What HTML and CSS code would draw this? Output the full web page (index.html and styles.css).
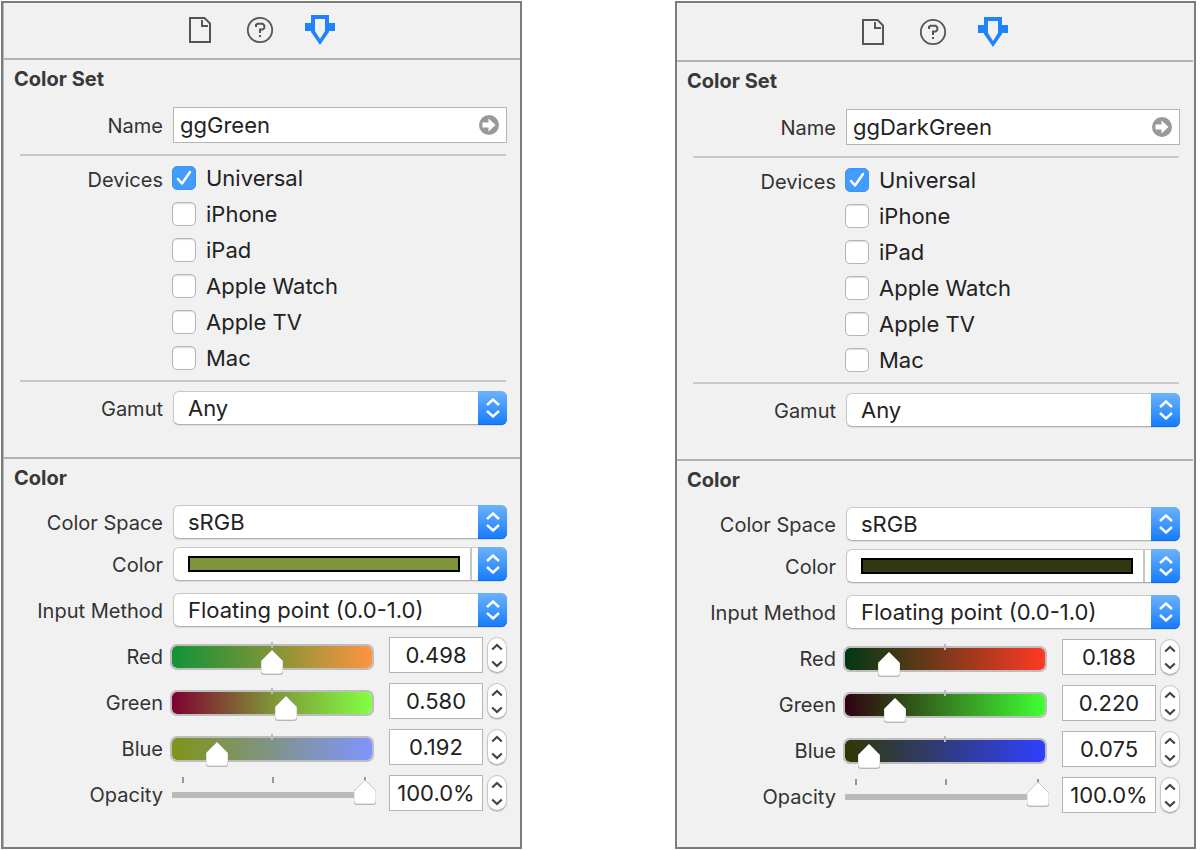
FILE: index.html
```html
<!DOCTYPE html>
<html lang="en">
<head>
<meta charset="utf-8">
<title>Color Set Inspector</title>
<link rel="stylesheet" href="styles.css">
</head>
<body>
<svg class="sprite" aria-hidden="true">
  <symbol id="i-file" viewBox="0 0 24 28"><path d="M2 2H16.500L22 7.500V26H2Z" fill="none" stroke="#555" stroke-width="2"/><path d="M14 4V10H20" fill="none" stroke="#555" stroke-width="2"/></symbol>
  <symbol id="i-help" viewBox="0 0 28 28"><circle cx="14" cy="14" r="12.200" fill="none" stroke="#555" stroke-width="1.800"/><path d="M10 11V8.800L11.500 7.800H16.700L18.300 9.400V12L16.700 13.600H14V17" fill="none" stroke="#555" stroke-width="2"/><path d="M13 19H15V21H13Z" fill="#555"/></symbol>
  <symbol id="i-attr" viewBox="0 0 30 30"><path fill="#1f83fb" fill-rule="evenodd" d="M6 0H24V8H30V16H24V17L15 30L6 17V16H0V8H6ZM10 4V16L15 24L20 16V4Z"/></symbol>
  <symbol id="i-go" viewBox="0 0 20 20"><circle cx="10" cy="10" r="10" fill="#999"/><path d="M3.500 7.500H9.500V3.500L16.500 10L9.500 16.500V12.500H3.500Z" fill="#fff"/></symbol>
  <symbol id="i-updown" viewBox="0 0 14 20"><path d="M1 7L7 1.500L13 7M1 13L7 18.500L13 13" fill="none" stroke="#fff" stroke-width="2.400"/></symbol>
  <symbol id="i-up" viewBox="0 0 12 8"><path d="M1.200 6.500L6 2L10.800 6.500" fill="none" stroke="#444" stroke-width="2.200"/></symbol>
  <symbol id="i-down" viewBox="0 0 12 8"><path d="M1.200 1.500L6 6L10.800 1.500" fill="none" stroke="#444" stroke-width="2.200"/></symbol>
</svg>
<main class="page">
  <section class="panel panel-light">
    <nav class="tabs">
      <button class="tab" aria-label="File"><svg width="24" height="28"><use href="#i-file"/></svg></button>
      <button class="tab" aria-label="Help"><svg width="28" height="28"><use href="#i-help"/></svg></button>
      <button class="tab" aria-label="Attributes"><svg width="30" height="30"><use href="#i-attr"/></svg></button>
    </nav>
    <div class="section">
      <h2 class="title">Color Set</h2>
      <div class="row">
        <label class="label" for="a-name">Name</label>
        <div class="field"><input class="text" id="a-name" value="ggGreen"><button class="go" aria-label="Go"><svg width="20" height="20"><use href="#i-go"/></svg></button></div>
      </div>
      <hr class="rule">
      <div class="row devices">
        <span class="label device-label">Devices</span>
        <div class="checks">
          <label class="check"><input type="checkbox" checked>Universal</label>
          <label class="check"><input type="checkbox">iPhone</label>
          <label class="check"><input type="checkbox">iPad</label>
          <label class="check"><input type="checkbox">Apple Watch</label>
          <label class="check"><input type="checkbox">Apple TV</label>
          <label class="check"><input type="checkbox">Mac</label>
        </div>
      </div>
      <hr class="rule rule-tight">
      <div class="row gamut">
        <label class="label" for="a-gamut">Gamut</label>
        <div class="popup"><select id="a-gamut"><option>Any</option></select><span class="cap"><svg width="14" height="20"><use href="#i-updown"/></svg></span></div>
      </div>
    </div>
    <div class="section color">
      <h2 class="title">Color</h2>
      <div class="row">
        <label class="label" for="a-space">Color Space</label>
        <div class="popup"><select id="a-space"><option>sRGB</option></select><span class="cap"><svg width="14" height="20"><use href="#i-updown"/></svg></span></div>
      </div>
      <div class="row well-row">
        <label class="label" for="a-well">Color</label>
        <div class="popup"><button class="well" id="a-well"><span class="swatch swatch-green"></span></button><span class="cap"><svg width="14" height="20"><use href="#i-updown"/></svg></span></div>
      </div>
      <div class="row method-row">
        <label class="label" for="a-method">Input Method</label>
        <div class="popup"><select id="a-method"><option>Floating point (0.0-1.0)</option></select><span class="cap"><svg width="14" height="20"><use href="#i-updown"/></svg></span></div>
      </div>
      <div class="row channel">
        <label class="label" for="a-red">Red</label>
        <div class="control"><div class="slider tinted g-red"><input type="range" id="a-red" min="0" max="1" step="0.001" value="0.498"></div><input class="value" aria-label="Red value" value="0.498"><div class="stepper"><button aria-label="Increase red"><svg width="12" height="8"><use href="#i-up"/></svg></button><button aria-label="Decrease red"><svg width="12" height="8"><use href="#i-down"/></svg></button></div></div>
      </div>
      <div class="row channel">
        <label class="label" for="a-green">Green</label>
        <div class="control"><div class="slider tinted g-green"><input type="range" id="a-green" min="0" max="1" step="0.001" value="0.580"></div><input class="value" aria-label="Green value" value="0.580"><div class="stepper"><button aria-label="Increase green"><svg width="12" height="8"><use href="#i-up"/></svg></button><button aria-label="Decrease green"><svg width="12" height="8"><use href="#i-down"/></svg></button></div></div>
      </div>
      <div class="row channel">
        <label class="label" for="a-blue">Blue</label>
        <div class="control"><div class="slider tinted g-blue"><input type="range" id="a-blue" min="0" max="1" step="0.001" value="0.192"></div><input class="value" aria-label="Blue value" value="0.192"><div class="stepper"><button aria-label="Increase blue"><svg width="12" height="8"><use href="#i-up"/></svg></button><button aria-label="Decrease blue"><svg width="12" height="8"><use href="#i-down"/></svg></button></div></div>
      </div>
      <div class="row channel">
        <label class="label" for="a-opacity">Opacity</label>
        <div class="control"><div class="slider plain"><input type="range" id="a-opacity" min="0" max="100" value="100"></div><input class="value" aria-label="Opacity value" value="100.0%"><div class="stepper"><button aria-label="Increase opacity"><svg width="12" height="8"><use href="#i-up"/></svg></button><button aria-label="Decrease opacity"><svg width="12" height="8"><use href="#i-down"/></svg></button></div></div>
      </div>
    </div>
  </section>

  <section class="panel panel-dark">
    <nav class="tabs">
      <button class="tab" aria-label="File"><svg width="24" height="28"><use href="#i-file"/></svg></button>
      <button class="tab" aria-label="Help"><svg width="28" height="28"><use href="#i-help"/></svg></button>
      <button class="tab" aria-label="Attributes"><svg width="30" height="30"><use href="#i-attr"/></svg></button>
    </nav>
    <div class="section">
      <h2 class="title">Color Set</h2>
      <div class="row">
        <label class="label" for="b-name">Name</label>
        <div class="field"><input class="text" id="b-name" value="ggDarkGreen"><button class="go" aria-label="Go"><svg width="20" height="20"><use href="#i-go"/></svg></button></div>
      </div>
      <hr class="rule">
      <div class="row devices">
        <span class="label device-label">Devices</span>
        <div class="checks">
          <label class="check"><input type="checkbox" checked>Universal</label>
          <label class="check"><input type="checkbox">iPhone</label>
          <label class="check"><input type="checkbox">iPad</label>
          <label class="check"><input type="checkbox">Apple Watch</label>
          <label class="check"><input type="checkbox">Apple TV</label>
          <label class="check"><input type="checkbox">Mac</label>
        </div>
      </div>
      <hr class="rule rule-tight">
      <div class="row gamut">
        <label class="label" for="b-gamut">Gamut</label>
        <div class="popup"><select id="b-gamut"><option>Any</option></select><span class="cap"><svg width="14" height="20"><use href="#i-updown"/></svg></span></div>
      </div>
    </div>
    <div class="section color">
      <h2 class="title">Color</h2>
      <div class="row">
        <label class="label" for="b-space">Color Space</label>
        <div class="popup"><select id="b-space"><option>sRGB</option></select><span class="cap"><svg width="14" height="20"><use href="#i-updown"/></svg></span></div>
      </div>
      <div class="row well-row">
        <label class="label" for="b-well">Color</label>
        <div class="popup"><button class="well" id="b-well"><span class="swatch swatch-dark"></span></button><span class="cap"><svg width="14" height="20"><use href="#i-updown"/></svg></span></div>
      </div>
      <div class="row method-row">
        <label class="label" for="b-method">Input Method</label>
        <div class="popup"><select id="b-method"><option>Floating point (0.0-1.0)</option></select><span class="cap"><svg width="14" height="20"><use href="#i-updown"/></svg></span></div>
      </div>
      <div class="row channel">
        <label class="label" for="b-red">Red</label>
        <div class="control"><div class="slider tinted d-red"><input type="range" id="b-red" min="0" max="1" step="0.001" value="0.188"></div><input class="value" aria-label="Red value" value="0.188"><div class="stepper"><button aria-label="Increase red"><svg width="12" height="8"><use href="#i-up"/></svg></button><button aria-label="Decrease red"><svg width="12" height="8"><use href="#i-down"/></svg></button></div></div>
      </div>
      <div class="row channel">
        <label class="label" for="b-green">Green</label>
        <div class="control"><div class="slider tinted d-green"><input type="range" id="b-green" min="0" max="1" step="0.001" value="0.220"></div><input class="value" aria-label="Green value" value="0.220"><div class="stepper"><button aria-label="Increase green"><svg width="12" height="8"><use href="#i-up"/></svg></button><button aria-label="Decrease green"><svg width="12" height="8"><use href="#i-down"/></svg></button></div></div>
      </div>
      <div class="row channel">
        <label class="label" for="b-blue">Blue</label>
        <div class="control"><div class="slider tinted d-blue"><input type="range" id="b-blue" min="0" max="1" step="0.001" value="0.075"></div><input class="value" aria-label="Blue value" value="0.075"><div class="stepper"><button aria-label="Increase blue"><svg width="12" height="8"><use href="#i-up"/></svg></button><button aria-label="Decrease blue"><svg width="12" height="8"><use href="#i-down"/></svg></button></div></div>
      </div>
      <div class="row channel">
        <label class="label" for="b-opacity">Opacity</label>
        <div class="control"><div class="slider plain"><input type="range" id="b-opacity" min="0" max="100" value="100"></div><input class="value" aria-label="Opacity value" value="100.0%"><div class="stepper"><button aria-label="Increase opacity"><svg width="12" height="8"><use href="#i-up"/></svg></button><button aria-label="Decrease opacity"><svg width="12" height="8"><use href="#i-down"/></svg></button></div></div>
      </div>
    </div>
  </section>
</main>
</body>
</html>
```
FILE: styles.css
```css
* { box-sizing: border-box; }
body { margin: 0; background: #fff; color: #222; font: 22px/26px Inter, "Liberation Sans", sans-serif; }
input, select, button { font: inherit; color: inherit; margin: 0; padding: 0; border: 0; background: none; border-radius: 0; }
.sprite { position: absolute; width: 0; height: 0; }
svg { display: block; }

.page { display: grid; grid-template-columns: 1fr 1fr; gap: 153px; padding: 1px 4px 1px 1px; }
.panel { border: 2px solid #7b7d7d; background: #f1f1f1; }
.panel-light { padding: 0 0 36px 1px; box-shadow: inset 1px 0 #b8baba; }
.panel-dark { padding: 2px 1px 0 0; }

.tabs { display: flex; justify-content: center; align-items: center; height: 57px; padding: 0 4px 2px 0; gap: 30px; border-bottom: 2px solid #b2b2b2; }
.tab { display: grid; place-items: center; width: 30px; }

.section { padding-bottom: 32px; }
.color { border-top: 2px solid #b2b2b2; padding-bottom: 0; }
.title { margin: 0 0 8px; padding-left: 10px; font-size: 20px; line-height: 38px; font-weight: 700; color: #383838; }
.row { display: grid; grid-template-columns: 159px minmax(0, 1fr); column-gap: 10px; align-items: center; padding-right: 13px; }
.label { padding-top: 2px; text-align: right; font-size: 20px; color: #333; }
.rule { border: 0; height: 2px; background: #cacaca; margin: 11px 14px 4px 16px; }
.rule-tight { margin-top: 4px; }

.field { position: relative; display: flex; margin-top: 1px; }
.text { width: 100%; height: 36px; padding: 0 36px 0 6px; border: 1px solid #b4b4b4; background: #fff; }
.go { position: absolute; right: 8px; top: 8px; }

.devices { align-items: start; }
.device-label { line-height: 36px; }
.checks { margin-left: -1px; }
.check { display: flex; align-items: center; gap: 10px; height: 36px; }
.check input { appearance: none; width: 24px; height: 24px; border: 1px solid #b6b6b6; border-radius: 5px; background: #fff; box-shadow: inset 0 1px 1px #ddd; }
.check input:checked { border-color: #3b93f7; box-shadow: none; background: #429cfb url("data:image/svg+xml,%3Csvg xmlns='http://www.w3.org/2000/svg' viewBox='0 0 22 22'%3E%3Cpath d='M5 12L9 16.500L17 5' fill='none' stroke='white' stroke-width='2.500' stroke-linecap='round' stroke-linejoin='round'/%3E%3C/svg%3E"); }

.gamut { margin-top: 9px; }
.popup { position: relative; display: flex; height: 34px; }
.popup select, .well { appearance: none; width: 100%; height: 34px; padding: 0 38px 0 14px; border: 1px solid #c8c8c8; border-bottom-color: #b0b0b0; border-radius: 6px; background: #fff; box-shadow: 0 1px 1px #ddd; }
.cap { position: absolute; top: 0; right: 0; width: 29px; height: 34px; display: grid; place-items: center; border-radius: 0 6px 6px 0; background: linear-gradient(#6cb3fa, #147bfd); box-shadow: inset 0 -1px #1268f2; pointer-events: none; }
.popup .well { display: flex; align-items: center; padding-right: 28px; }
.swatch { display: block; flex: 1; height: 16px; margin-right: 10px; border: 2px solid #000; }
.well::after { content: ""; align-self: stretch; width: 2px; margin-right: 6px; background: #c6c6c6; }
.swatch-green { background: #7f9438; }
.swatch-dark { background: #303814; }
.well-row { margin-top: 8px; }
.method-row { margin-top: 12px; }

.channel { margin-top: 10px; }
.channel .label { padding-top: 4px; }
.control { display: flex; margin-left: -3px; height: 36px; }
.slider { position: relative; flex: 1; margin-right: 13px; min-width: 0; }
.slider input { appearance: none; display: block; width: 100%; height: 36px; }
.slider input::-webkit-slider-thumb { appearance: none; width: 22px; height: 28px; background: url("data:image/svg+xml,%3Csvg xmlns='http://www.w3.org/2000/svg' viewBox='1 0 22 28'%3E%3Cpath d='M12 2L23 13V23Q23 26 20 26H4Q1 26 1 23V13Z' fill='%23999' opacity='.6'/%3E%3Cpath d='M12 1L23 12V22Q23 25 20 25H4Q1 25 1 22V12Z' fill='white' stroke='%23aaa' stroke-width='.6'/%3E%3C/svg%3E"); }
.tinted { padding-right: 2px; }
.tinted input { padding: 7px 0 3px; }
.tinted input::-webkit-slider-runnable-track { height: 26px; margin: 0; border: 2px solid #bdbdbd; border-radius: 7px; background: var(--ramp) padding-box; }
.tinted input::-webkit-slider-thumb { margin-top: 3px; }
.tinted::after { content: ""; position: absolute; left: calc(50% - 2px); top: 5px; width: 2px; height: 6px; background: #bbb; pointer-events: none; }
.plain input { padding: 7px 0 3px; background: linear-gradient(#999, #999) 12px 2px / 2px 6px no-repeat, linear-gradient(#999, #999) 50% 2px / 2px 6px no-repeat, linear-gradient(#999, #999) right 10px top 2px / 2px 6px no-repeat; }
.plain input::-webkit-slider-runnable-track { height: 26px; background: linear-gradient(#bbb, #bbb) 2px 10px / 192px 6px no-repeat; }
.plain input::-webkit-slider-thumb { margin-top: -3px; }
.g-red { --ramp: linear-gradient(90deg, #119338, #7f9438, #ff9440); }
.g-green { --ramp: linear-gradient(90deg, #7f0030, #7f9438, #84ff44); }
.g-blue { --ramp: linear-gradient(90deg, #7f9418, #7f9488, #7f94ff); }
.d-red { --ramp: linear-gradient(90deg, #003816, #303814 19%, #ff3a24); }
.d-green { --ramp: linear-gradient(90deg, #300014, #303814 22%, #40ff34); }
.d-blue { --ramp: linear-gradient(90deg, #303800, #303814 7%, #3040ff); }

.value { width: 94px; height: 36px; margin-right: 4px; text-align: center; border: 1px solid #b4b4b4; background: #fff; }
.stepper { display: grid; grid-template-rows: 1fr 1fr; width: 20px; height: 36px; border: 1px solid #c8c8c8; border-bottom-color: #aaa; border-radius: 10px; background: #fff; box-shadow: 0 1px 1px #ccc; }
.stepper button { display: grid; place-items: center; }
```
